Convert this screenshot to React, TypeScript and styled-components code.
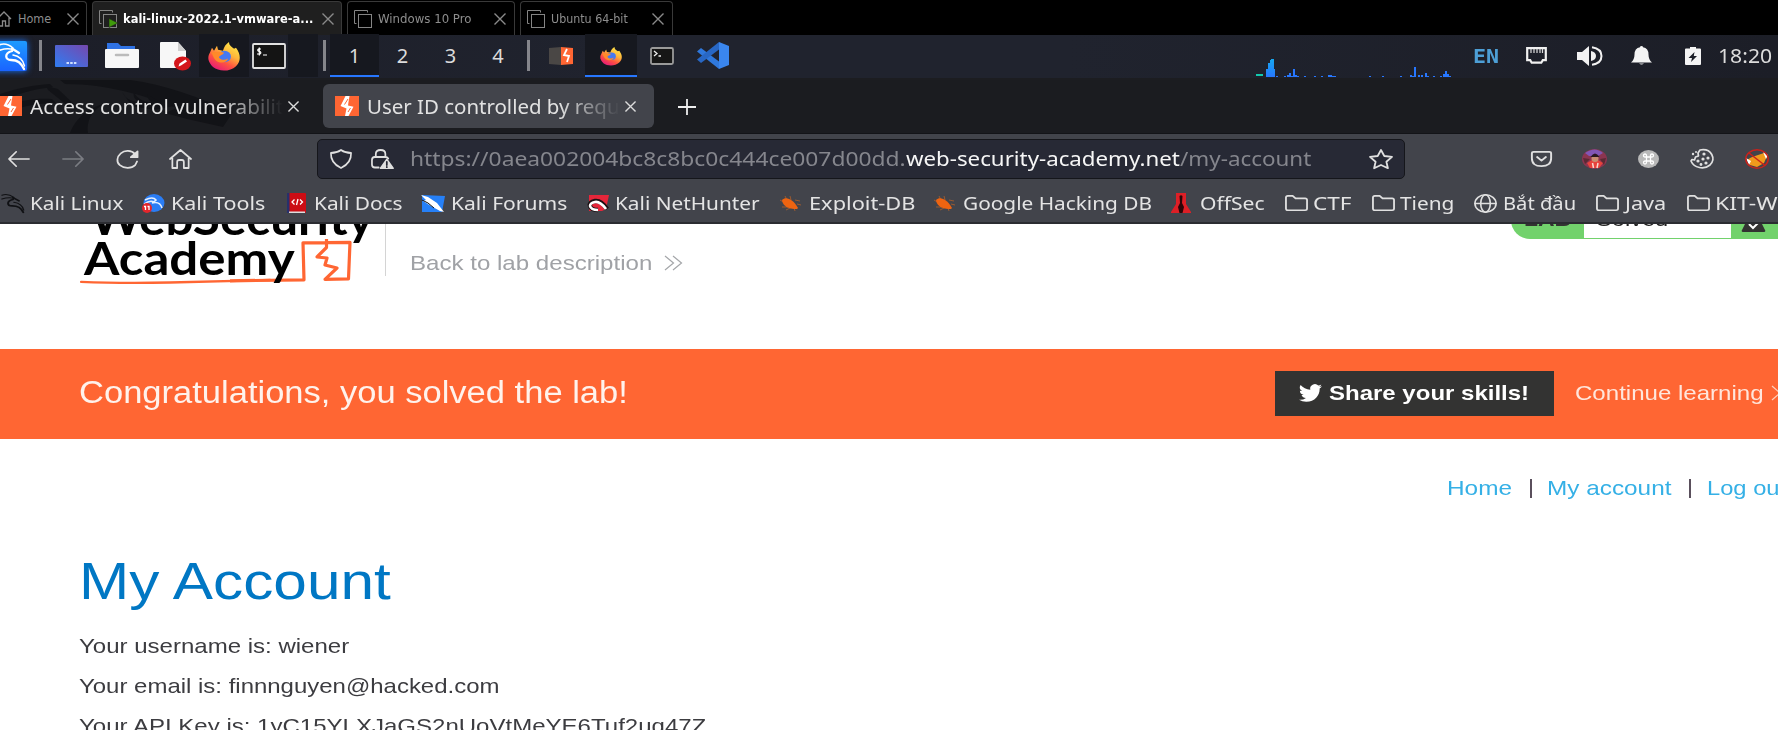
import React, { useLayoutEffect, useRef, useState } from "react";
import styled, { createGlobalStyle, css } from "styled-components";

const GlobalStyle = createGlobalStyle`
  *, *::before, *::after { box-sizing: border-box; }
  html, body { margin: 0; background: #fff; overflow: hidden; }
  svg { display: block; flex: none; overflow: visible; }
`;

const ui = `"Noto Sans", "Open Sans", sans-serif`;
const web = `"Liberation Sans", Arial, sans-serif`;
const host = `"DejaVu Sans Condensed", "DejaVu Sans", sans-serif`;

/* ---------- text whose width is stretched to a fixed measure ---------- */

const Measure = styled.span<{ $w: number; $gap?: number }>`
  display: block;
  flex: none;
  width: ${(p) => p.$w}px;
  margin-left: ${(p) => p.$gap ?? 0}px;
  text-align: left;
  white-space: nowrap;
`;
const Glyphs = styled.span`
  display: inline-block;
  transform-origin: 0 50%;
`;

function Fit({ w, gap, children }: { w: number; gap?: number; children: React.ReactNode }) {
  const ref = useRef<HTMLSpanElement>(null);
  const [scale, setScale] = useState(1);
  useLayoutEffect(() => {
    if (ref.current) setScale(w / ref.current.offsetWidth);
  }, [w]);
  return (
    <Measure $w={w} $gap={gap}>
      <Glyphs ref={ref} style={{ transform: `scaleX(${scale})` }}>
        {children}
      </Glyphs>
    </Measure>
  );
}

const Icon = styled.svg<{ $gap?: number; $drop?: number }>`
  margin-left: ${(p) => p.$gap ?? 0}px;
  margin-top: ${(p) => p.$drop ?? 0}px;
`;

const Screen = styled.div`
  width: 1778px;
  height: 730px;
  overflow: hidden;
  display: flex;
  flex-direction: column;
  background: #fff;
`;

/* ---------- host tabs ---------- */

const HostBar = styled.div`
  height: 35px;
  flex: none;
  background: #000;
  display: flex;
  padding-top: 1px;
`;
const HostTab = styled.div<{ $w: number; $gap: number; $active?: boolean }>`
  display: flex;
  align-items: center;
  width: ${(p) => p.$w}px;
  height: 34px;
  margin-left: ${(p) => p.$gap}px;
  border: 1px solid #393939;
  border-bottom: 0;
  border-radius: 4px 4px 0 0;
  font: 12.5px/16px ${host};
  color: #8d8d8d;
  ${(p) =>
    p.$active &&
    css`
      background: #1f1f1f;
      color: #fff;
      font-weight: 700;
    `}
`;

const Close = ({ gap, size = 12, color = "#8a8a8a", sw = 1.4 }: { gap: number; size?: number; color?: string; sw?: number }) => (
  <Icon $gap={gap} width={size} height={size} viewBox="0 0 12 12" stroke={color} strokeWidth={sw}>
    <path d="M.5.5l11 11M11.5.5l-11 11" />
  </Icon>
);

const VmIcon = ({ gap, running }: { gap: number; running?: boolean }) => (
  <Icon $gap={gap} width="18" height="18" viewBox="0 0 18 18" fill="none" stroke="#858585" strokeWidth="1">
    <path d="M2.500 13.500H.5V.5h13v2" />
    <rect x="4.500" y="4.500" width="13" height="13" />
    {running && <path d="M10 8.500v9l9-4.500z" fill="#3f9b0b" stroke="#1f1f1f" strokeWidth=".6" />}
  </Icon>
);

/* ---------- desktop panel ---------- */

const Panel = styled.div`
  height: 45px;
  flex: none;
  display: flex;
  align-items: center;
  padding-bottom: 2px;
  background: linear-gradient(90deg, #1c1e28 0%, #20232e 35%, #20232e 60%, #1c1e27 100%);
  border-bottom: 2px solid #1c1d21;
  font: 20px/28px ${ui};
  color: #dcdcdc;
`;
const Divider = styled.div<{ $gap: number }>`
  width: 3px;
  height: 31px;
  flex: none;
  margin-left: ${(p) => p.$gap}px;
  background: #85868c;
`;
const Slot = styled.div<{ $w: number; $gap?: number; $dark?: boolean; $active?: boolean }>`
  display: flex;
  flex: none;
  align-items: center;
  justify-content: center;
  width: ${(p) => p.$w}px;
  height: 43px;
  margin-left: ${(p) => p.$gap ?? 0}px;
  background: ${(p) => (p.$dark ? "#16181f" : "transparent")};
  box-shadow: ${(p) => (p.$active ? "inset 0 -2px #2777ff" : "none")};
`;
const Lang = styled.div`
  font: 700 20px/28px "DejaVu Sans Mono", monospace;
  color: #4d9fd6;
`;

const Dragon = ({ color = "#fff" }: { color?: string }) => (
  <g fill="none" stroke={color} strokeLinecap="round" strokeLinejoin="round">
    <path d="M0 4q7-3 14 3" strokeWidth="1.500" />
    <path d="M0 9.500q8-3 14-1" strokeWidth="1.500" />
    <path d="M13 7.500l7 4.500M13 10c-8 2-7 9-1 9 7 0 10 3 13 9" strokeWidth="2.300" />
    <path d="M14 14c6 1 10 4 11.500 11" strokeWidth="1.500" />
  </g>
);

const Firefox = ({ w, h, id }: { w: number; h: number; id: string }) => (
  <svg width={w} height={h} viewBox="0 0 32 29" preserveAspectRatio="none">
    <defs>
      <linearGradient id={id} x1="0.85" y1="0" x2="0.25" y2="1">
        <stop offset="0" stopColor="#fff04a" />
        <stop offset=".4" stopColor="#ffb43a" />
        <stop offset=".68" stopColor="#ff5340" />
        <stop offset="1" stopColor="#e5167c" />
      </linearGradient>
    </defs>
    <path d="M2 11l2-5 2 3 3-5 1 4 5 1c1-4 3-7 6-9 0 4 3 5 5 7l2-1c5 7 5 14 0 19-6 6-17 6-23 1C0 21-1 16 2 11z" fill={`url(#${id})`} />
    <ellipse cx="16.500" cy="15" rx="6.500" ry="6" fill="#4579f2" />
    <path d="M3 11l6-1q4 0 7 1c-1 3-5 3-5 5 2 3 6 3 9 1-1 5-9 6-13 1-2-2-2-5-4-7z" fill="#ff8a2a" />
  </svg>
);

const bars: [number, number][] = [
  [20, 1], [28, 1], [31, 2], [33, 4], [35, 1], [37, 8], [39, 2], [41, 1], [48, 1], [58, 1], [65, 1], [72, 2],
  [74, 2], [76, 1], [78, 1], [113, 1], [126, 1], [144, 1], [154, 2], [156, 1], [158, 10], [162, 2], [165, 2],
  [169, 4], [171, 1], [177, 1], [184, 1], [187, 3], [189, 6], [191, 3], [193, 1],
];

/* ---------- browser ---------- */

const TabStrip = styled.div`
  position: relative;
  height: 54px;
  flex: none;
  display: flex;
  align-items: center;
  padding-bottom: 1px;
  background: #1b1c20;
  border-bottom: 1px solid #131418;
  font: 19px/26px ${ui};
  color: #e2e2e2;
`;
const Backdrop = styled.svg`
  position: absolute;
  left: 0;
  top: 0;
`;
const BrowserTab = styled.div<{ $w: number; $gap?: number; $active?: boolean }>`
  position: relative;
  display: flex;
  align-items: center;
  width: ${(p) => p.$w}px;
  height: 44px;
  margin-left: ${(p) => p.$gap ?? 0}px;
  border-radius: 6px;
  background: ${(p) => (p.$active ? "#42444b" : "transparent")};
`;
const Title = styled.div<{ $w: number; $gap: number }>`
  flex: none;
  width: ${(p) => p.$w}px;
  margin-left: ${(p) => p.$gap}px;
  padding-top: 2px;
  overflow: hidden;
  mask-image: linear-gradient(90deg, #000 76%, transparent 100%);
`;

const PortSwigger = ({ gap }: { gap: number }) => (
  <Icon $gap={gap} width="24" height="20" viewBox="0 0 24 20" preserveAspectRatio="none">
    <rect width="24" height="20" fill="#ff6633" />
    <path d="M10.500 0h4l-1 6-.5 3.500 5.500 1.200-5 9.300h-3.500l1.500-7.500-6-2.500z" fill="#fff" />
    <path d="M13 3l-3.500 5.500M15.500 12L13 16" stroke="#ff6633" strokeWidth="1" />
  </Icon>
);

const Toolbar = styled.div`
  height: 50px;
  flex: none;
  display: flex;
  align-items: center;
  background: #42444b;
`;
const UrlBar = styled.div`
  display: flex;
  align-items: center;
  flex: none;
  width: 1088px;
  height: 40px;
  margin-left: 125px;
  border: 1px solid #15161b;
  border-radius: 5px;
  background: #272935;
  font: 20px/28px ${ui};
  color: #85868d;
`;
const Domain = styled.span`
  color: #f6f6f6;
`;
const Bookmarks = styled.div`
  height: 40px;
  flex: none;
  display: flex;
  align-items: center;
  background: #42444b;
  border-bottom: 2px solid #2b2c31;
  font: 18.5px/28px ${ui};
  color: #e4e4e4;
`;

const Line = ({ w, h, gap, children, color = "#e0e0e0", sw = 1.8 }: any) => (
  <Icon
    $gap={gap}
    width={w}
    height={h}
    viewBox="0 0 24 20"
    preserveAspectRatio="none"
    fill="none"
    stroke={color}
    strokeWidth={sw}
    strokeLinecap="round"
    strokeLinejoin="round"
  >
    {children}
  </Icon>
);

const Folder = ({ gap }: { gap: number }) => (
  <Line w={23} h={17} gap={gap} sw={1.9}>
    <path d="M1 16V3q0-2 2-2h5l3 3h10q2 0 2 2v10q0 2-2 2H3q-2 0-2-2z" />
  </Line>
);
const Bug = ({ gap }: { gap: number }) => (
  <Icon $gap={gap} width="22" height="17" viewBox="0 0 22 17">
    <path d="M1 5l5 3M6 1l2 4M11 1l1 4M16 5l5 1M18 9l4 1M3 12h6M7 15l6-3M16 16l-1-3" stroke="#9a5a30" strokeWidth="1" />
    <path d="M3 5c4-4 11-1 16 8l-1 1c-6 0-14-1-15-9z" fill="#ee6411" />
  </Icon>
);

/* ---------- page ---------- */

const Page = styled.main`
  flex: 1;
  min-height: 0;
  overflow: hidden;
  font: 21px/30px ${web};
  color: #3c3c40;
`;
const LabHeader = styled.header`
  display: flex;
  align-items: flex-start;
  height: 125px;
`;
const Logo = styled.div`
  position: relative;
  width: 305px;
  height: 62px;
  flex: none;
  margin-left: 80px;
  overflow: hidden;
  font: 700 46px/40px Lato, sans-serif;
  color: #000;
`;
const LogoMark = styled.svg`
  position: absolute;
  left: 0;
  top: 0;
`;
const LogoText = styled.div`
  position: relative;
  margin-top: -26px;
`;
const BackLink = styled.a`
  display: flex;
  align-items: center;
  height: 52px;
  padding: 26px 0 0 24px;
  border-left: 1px solid #d4d4d4;
  color: #a0a2a6;
  line-height: 26px;
`;
const Status = styled.div`
  display: flex;
  flex: none;
  align-items: flex-end;
  width: 290px;
  height: 38px;
  margin: -23px 0 0 829px;
  border-radius: 19px;
  background: #72d26c;
  font-weight: 700;
  color: #333332;
`;
const StatusLabel = styled.div`
  line-height: 36px;
  padding-bottom: 2px;
`;
const StatusValue = styled.div`
  width: 147px;
  height: 36px;
  margin: 0 0 1.5px 13px;
  padding-left: 12px;
  background: #fff;
  font-weight: 400;
  line-height: 34px;
  color: #222;
`;
const Flask = styled(Icon)`
  margin-bottom: 7px;
`;
const Banner = styled.section`
  display: flex;
  align-items: center;
  height: 90px;
  padding-left: 79px;
  background: #ff6633;
  color: #fff2ec;
`;
const BannerTitle = styled.div`
  font-size: 31px;
  line-height: 36px;
  padding-bottom: 3px;
`;
const Share = styled.button`
  display: flex;
  align-items: center;
  flex: none;
  width: 279px;
  height: 45px;
  margin: 0 0 1px 647px;
  padding: 0 0 2px 24px;
  border: 0;
  background: #333332;
  color: #fff;
  font: 700 21px/30px ${web};
`;
const Continue = styled.a`
  display: flex;
  align-items: center;
  margin-left: 21px;
  padding-bottom: 3px;
  color: #ffe6dc;
`;
const AccountNav = styled.nav`
  display: flex;
  padding: 34px 0 0 1447px;
  color: #35b0e6;
`;
const Bar = styled.span`
  flex: none;
  width: 2px;
  height: 19px;
  margin: 6px 0 0 18px;
  background: #5a4f5c;
`;
const Heading = styled.h1`
  margin: 48px 0 0 79px;
  font: 400 52px/60px ${web};
  color: #0077c4;
`;
const Details = styled.div`
  display: flex;
  flex-direction: column;
  gap: 10px;
  padding: 20px 0 0 79px;
`;

export default function App() {
  return (
    <Screen>
      <GlobalStyle />

      <HostBar>
        <HostTab $w={90} $gap={-3}>
          <Icon $gap={-2} width="16" height="16" viewBox="0 0 16 16" fill="none" stroke="#8a8a8a" strokeWidth="1.300">
            <path d="M1 8l7-7 7 7M3 6.500V15h3.500v-5h3v5H13V6.500" />
          </Icon>
          <Fit w={33} gap={6}>Home</Fit>
          <Close gap={16} />
        </HostTab>
        <HostTab $w={250} $gap={5} $active>
          <VmIcon gap={6} running />
          <Fit w={190} gap={6}>kali-linux-2022.1-vmware-a...</Fit>
          <Close gap={9} />
        </HostTab>
        <HostTab $w={168} $gap={5}>
          <VmIcon gap={6} />
          <Fit w={93} gap={6}>Windows 10 Pro</Fit>
          <Close gap={23} />
        </HostTab>
        <HostTab $w={153} $gap={5}>
          <VmIcon gap={6} />
          <Fit w={77} gap={6}>Ubuntu 64-bit</Fit>
          <Close gap={24} />
        </HostTab>
      </HostBar>

      <Panel>
        <Icon width="27" height="30" viewBox="0 0 27 30">
          <defs>
            <linearGradient id="kali" x1="0" y1="1" x2="0" y2="0">
              <stop offset="0" stopColor="#1a63ff" />
              <stop offset="1" stopColor="#1e9bff" />
            </linearGradient>
          </defs>
          <rect x="-8" width="35" height="30" rx="2" fill="url(#kali)" style={{ filter: "drop-shadow(0 0 3px #1775ff)" }} />
          <g transform="translate(-1 0)"><Dragon /></g>
        </Icon>
        <Divider $gap={12} />
        <Icon $gap={13} width="33" height="22" viewBox="0 0 33 22">
          <defs>
            <linearGradient id="desk" x1="0" y1="1" x2="1" y2="0">
              <stop offset="0" stopColor="#2f7df2" />
              <stop offset="1" stopColor="#7648ae" />
            </linearGradient>
          </defs>
          <rect width="33" height="22" rx="1" fill="url(#desk)" />
          <path d="M11.500 18h10" stroke="#cfe0ff" strokeWidth="2" strokeDasharray="2.500 1.200" />
        </Icon>
        <Icon $gap={17} width="34" height="25" viewBox="0 0 34 25">
          <path d="M2 0h11l3 3h14v8H2z" fill="#2f72e4" />
          <rect y="6" width="34" height="19" rx="1" fill="#f7f7f7" />
          <path d="M11 12h12" stroke="#bbb" strokeWidth="2.500" strokeLinecap="round" />
        </Icon>
        <Icon $gap={21} width="32" height="28" viewBox="0 0 32 28">
          <path d="M1 0h17l8 9v17H1q-1 0-1-1V1q0-1 1-1z" fill="#f7f7f7" />
          <path d="M18 0l8 9h-8z" fill="#cfcfcf" />
          <ellipse cx="22.500" cy="21.500" rx="8.500" ry="7" fill="#d4161b" />
          <path d="M18.500 24.500l1-3 6-4 1.500 2-6 4z" fill="#fff" />
        </Icon>
        <Slot $w={50} $gap={7} $dark><Firefox id="fxLarge" w={32} h={28} /></Slot>
        <Icon $gap={3} width="34" height="26" viewBox="0 0 34 26">
          <rect x="1" y="1" width="32" height="24" rx="1" fill="#141414" stroke="#e2e2e2" strokeWidth="1.800" />
          <path d="M9 6H6.500q-1.500 1.200 0 2.200l1.800.5q1.200 1.500-.3 2.300H5M7.300 4.500v8M11 12h4" fill="none" stroke="#fff" strokeWidth="1.200" />
        </Icon>
        <Slot $w={30} $gap={2} $dark />
        <Divider $gap={5} />
        <Slot $w={49} $gap={4} $dark $active>1</Slot>
        <Slot $w={47}>2</Slot>
        <Slot $w={49}>3</Slot>
        <Slot $w={46}>4</Slot>
        <Divider $gap={6} />
        <Icon $gap={19} width="24" height="18" viewBox="0 0 24 18">
          <path d="M0 1l12-1v18L0 17z" fill="#4a4745" />
          <path d="M12 0l12 1v16l-12 1z" fill="#ff6633" />
          <path d="M18 2l-3 6 5 1-2 6" fill="none" stroke="#fff" strokeWidth="1.800" />
        </Icon>
        <Slot $w={52} $gap={12} $dark $active><Firefox id="fxSmall" w={22} h={18} /></Slot>
        <Icon $gap={13} width="24" height="18" viewBox="0 0 24 18">
          <rect x="1" y="1" width="22" height="16" rx="1.500" fill="#161616" stroke="#9a9a9a" strokeWidth="1.800" />
          <path d="M4 4l3 2.500L4 9M8.500 9H11" fill="none" stroke="#eee" strokeWidth="1.300" />
        </Icon>
        <Icon $gap={23} width="32" height="27" viewBox="0 0 32 27">
          <path d="M22 27v-7.500L4 6 0 9.500z" fill="#2f78dc" />
          <path d="M22 0v7.500L4 21l-4-3.500z" fill="#2867c4" />
          <path d="M22 0l10 4v19l-10 4z" fill="#3a86ee" />
        </Icon>
        <Icon $gap={527} $drop={25} width="194" height="18" viewBox="0 0 194 18" shapeRendering="crispEdges">
          <defs>
            <linearGradient id="load" x1="0" y1="0" x2="0" y2="1">
              <stop offset="0" stopColor="#16a8f0" />
              <stop offset="1" stopColor="#2777ff" />
            </linearGradient>
          </defs>
          <rect y="15" width="7" height="2" fill="#12c9ae" />
          <path d="M10 18v-8h2V4h2V1l2-1h2v10h1v8z" fill="url(#load)" />
          {bars.map(([x, h]) => (
            <rect key={x} x={x} y={18 - h} width="2" height={h} fill="#2777ff" />
          ))}
        </Icon>
        <Lang><Fit w={26} gap={23}>EN</Fit></Lang>
        <Icon $gap={27} width="21" height="17" viewBox="0 0 21 17">
          <path d="M1.200 1.200h18.600v12h-3l-1.500 2.500H5.700L4.200 13.200h-3z" fill="none" stroke="#f0f0f0" strokeWidth="2.200" />
          <path d="M5 2v4M8 2v4M11 2v4M14 2v4M16.500 2v4" stroke="#ddd" strokeWidth="1.200" />
        </Icon>
        <Icon $gap={30} width="26" height="20" viewBox="0 0 26 20">
          <path d="M0 6h5l7-6v20l-7-6H0z" fill="#f2f2f2" />
          <path d="M14 5q5 1 5 5t-5 5z" fill="#f2f2f2" />
          <path d="M15 1.200q9.500 1.500 9.500 8.800T15 18.800" fill="none" stroke="#f2f2f2" strokeWidth="2" />
        </Icon>
        <Icon $gap={28} width="21" height="19" viewBox="0 0 21 19">
          <path d="M10.500 0q1.500 0 1.500 1.300 5.500 1 5.500 7.200 0 5 3.500 8H0q3.500-3 3.500-8Q3.500 2.300 9 1.300 9 0 10.500 0zM8 17.500h5q-2.500 2-5 0z" fill="#f4f4f4" />
        </Icon>
        <Icon $gap={33} width="16" height="18" viewBox="0 0 16 18">
          <path d="M5 0h6v1.500h4q1 0 1 1V17q0 1-1 1H1q-1 0-1-1V2.500q0-1 1-1h4z" fill="#f4f4f4" />
          <path d="M9.500 5L3.500 11H7l-1 4 6-6H8.800z" fill="#1c1e27" />
        </Icon>
        <Fit w={54} gap={17}>18:20</Fit>
      </Panel>

      <TabStrip>
        <Backdrop width="260" height="53" viewBox="0 0 260 53" fill="#121317">
          <path d="M0 14c18-6 34-9 50-10l3 3C34 9 16 14 0 22zM46 6l12 3 20 19-10-2-20-16z" />
          <path d="M0 28c20-8 36-10 52-9l4 4c-20 0-38 4-56 12z" />
          <path d="M60 0h70c34 4 70 18 103 32l-10 15-36-8-22-6 12-5c-26-10-66-24-112-24z" />
          <path d="M122 12c3 6 8 9 16 10-4-4-5-6-4-9 4 6 10 9 18 10-4-4-5-6-4-9 8 7 16 10 26 12l-20 4-22-4z" />
          <path d="M110 22c-22 5-34 16-40 31h18c-2-14 6-26 22-31z" />
        </Backdrop>
        <BrowserTab $w={310}>
          <PortSwigger gap={-2} />
          <Title $w={253} $gap={8}><Fit w={253}>Access control vulnerabilit</Fit></Title>
          <Close gap={5} size={11} color="#dcdcdc" sw={1.5} />
        </BrowserTab>
        <BrowserTab $w={331} $gap={13} $active>
          <PortSwigger gap={12} />
          <Title $w={253} $gap={8}><Fit w={253}>User ID controlled by requ</Fit></Title>
          <Close gap={5} size={11} color="#dcdcdc" sw={1.5} />
        </BrowserTab>
        <Icon $gap={24} $drop={2} width="18" height="16" viewBox="0 0 18 16" stroke="#eee" strokeWidth="1.800">
          <path d="M0 8h18M9 0v16" />
        </Icon>
      </TabStrip>

      <Toolbar>
        <Line w={22} h={16} gap={8}><path d="M1 10h22M9 1L1 10l8 9" /></Line>
        <Line w={22} h={16} gap={32} color="#7b7d83"><path d="M1 10h22M15 1l8 9-8 9" /></Line>
        <Line w={23} h={19} gap={32}>
          <path d="M20 4.500C16 0 9 0 5 3.500s-5 9-1 12.500 12 4 16 0l2-4" />
          <path d="M22.500 1.500v6h-7z" fill="#e0e0e0" />
        </Line>
        <Line w={23} h={20} gap={30}>
          <path d="M1 10L12 1l11 9M3.500 9v10h5v-6q0-2 2-2h3q2 0 2 2v6h5V9" />
        </Line>
        <UrlBar>
          <Line w={22} h={20} gap={12}>
            <path d="M12 1q4.500 3 11 3Q23.500 14 12 19 .5 14 1 4 7.500 4 12 1z" />
          </Line>
          <Line w={23} h={20} gap={19}>
            <path d="M5 8V5q0-4 5-4t5 4v3M8 18.500H4q-3 0-3-3V11q0-3 3-3h11q2 0 3 1.500" />
            <path d="M16.500 10.500L23 19.200H10z" fill="#e0e0e0" />
            <path d="M16.500 13v3M16.500 18v.2" stroke="#272935" />
          </Line>
          <Fit w={496} gap={16}>https://0aea002004bc8c8bc0c444ce007d00dd.</Fit>
          <Domain><Fit w={274}>web-security-academy.net</Fit></Domain>
          <Fit w={131}>/my-account</Fit>
          <Line w={24} h={20} gap={58}>
            <path d="M12 1l3.300 6 7.700.9-5.600 4.800 1.500 6.500L12 16l-6.900 3.200 1.500-6.500L1 7.900 8.700 7z" />
          </Line>
        </UrlBar>
        <Line w={21} h={16} gap={126} sw={2.2}>
          <path d="M3 1h18q2 0 2 2v6q0 10-11 10T1 9V3q0-2 2-2zM7 7.500l5 4.500 5-4.500" />
        </Line>
        <Icon $gap={30} width="25" height="20" viewBox="0 0 25 20">
          <ellipse cx="12.500" cy="10" rx="12.500" ry="10" fill="#8b3550" />
          <path d="M3 4q10-7 18 0l-5 3H7z" fill="#8256b5" />
          <path d="M1 9l7 1-5 5zM24 9l-6 1 4 6z" fill="#5b2a34" />
          <path d="M5 14l5-3h6l5 3-4 5H8z" fill="#e8423c" />
          <ellipse cx="13" cy="9.500" rx="3.500" ry="3.500" fill="#c98d72" />
          <path d="M8.500 8q4.500-7 9 0z" fill="#2a1820" />
          <path d="M10.500 14l1 5M16 14l-1 5" stroke="#f7d9d0" strokeWidth="1.500" />
        </Icon>
        <Icon $gap={31} width="21" height="18" viewBox="0 0 21 18">
          <ellipse cx="10.500" cy="9" rx="10.500" ry="9" fill="#b9b9b9" />
          <path d="M8.500 7V5.500q0-1.500-1.500-1.500t-1.500 1.500T7 7h7q1.500 0 1.500-1.500T14 4t-1.500 1.500v7q0 1.500 1.500 1.500t1.500-1.500T14 11H7q-1.500 0-1.500 1.500T7 14t1.500-1.500z" fill="none" stroke="#fff" strokeWidth="1.300" />
        </Icon>
        <Line w={24} h={20} gap={31} sw={1.7}>
          <path d="M10 1C22-1 26 10 20 16c-6 5-16 3-19-4l1-1.500 2.500.5 1-3 3-1-.5-3z" />
          <g fill="#e0e0e0" stroke="none">
            <circle cx="14" cy="5" r="1.600" /><circle cx="18" cy="9" r="1.600" /><circle cx="13" cy="10" r="1.600" />
            <circle cx="8" cy="12" r="1.600" /><circle cx="16" cy="14" r="1.600" /><circle cx="11" cy="15.500" r="1.400" />
            <circle cx="3" cy="5" r="1.200" /><circle cx="6" cy="3" r="1" />
          </g>
        </Line>
        <Icon $gap={31} width="24" height="20" viewBox="0 0 24 20">
          <path d="M2 11q4-3 8-4l9-3 3 3-3 7-7 4-7-2z" fill="#f09a1c" />
          <path d="M1 9l5 3-2 4zM18 3l5 3-2 4z" fill="#fff" />
          <ellipse cx="12" cy="10" rx="11.200" ry="9.200" fill="none" stroke="#c8221c" strokeWidth="1.500" />
          <path d="M4 4l16 12.500" stroke="#c8221c" strokeWidth="1.500" />
        </Icon>
      </Toolbar>

      <Bookmarks>
        <Icon $gap={1} width="24" height="20" viewBox="-1 1 28 28" preserveAspectRatio="none"><Dragon color="#101114" /></Icon>
        <Fit w={93} gap={5}>Kali Linux</Fit>
        <Icon $gap={19} width="23" height="19" viewBox="0 0 23 19">
          <ellipse cx="12" cy="9" rx="10.500" ry="9" fill="#2a7df5" />
          <path d="M3 6q8-4 11 0l-4 3q8-2 10 5M2 10q6-4 10-2" stroke="#e5f0ff" strokeWidth="1.500" fill="none" />
          <ellipse cx="5" cy="14" rx="5" ry="5" fill="#e2262c" />
          <path d="M2 12.500h1.500V16M5.500 12.500H7V16" stroke="#fff" strokeWidth="1.300" fill="none" />
        </Icon>
        <Fit w={94} gap={6}>Kali Tools</Fit>
        <Icon $gap={22} width="19" height="20" viewBox="0 0 19 20">
          <rect width="19" height="20" rx="1" fill="#cc0d14" />
          <path d="M0 0h2.500v20H0z" fill="#27306b" />
          <path d="M2 18.500h16V20H2z" fill="#ddd" />
          <path d="M7.500 6.500L5 9l2.500 2.500M13 6.500L15.500 9 13 11.500M11 6l-1.500 6" fill="none" stroke="#fff" strokeWidth="1.300" />
        </Icon>
        <Fit w={89} gap={8}>Kali Docs</Fit>
        <Icon $gap={18} width="25" height="19" viewBox="0 0 25 19">
          <path d="M1 1l23 1-3 16H1z" fill="#2680f7" />
          <path d="M0 1l7 2 9 6 7 9-4-1-9-5-8-5 3-1z" fill="#fff" />
          <path d="M1 6l6 3 6 5" stroke="#111" strokeWidth="1" fill="none" />
        </Icon>
        <Fit w={116} gap={5}>Kali Forums</Fit>
        <Icon $gap={18} width="25" height="18" viewBox="0 0 25 18">
          <path d="M4 1l20 0-3 14-4 2H4z" fill="#e5263a" />
          <path d="M22 15q-6-9-12-8t-5 5q1 4 8 4" fill="none" stroke="#1c1013" strokeWidth="4.500" />
          <path d="M21 15q-6-8-11-7t-5 4q1 4 8 4" fill="none" stroke="#fff" strokeWidth="2.600" />
        </Icon>
        <Fit w={145} gap={5}>Kali NetHunter</Fit>
        <Bug gap={19} />
        <Fit w={106} gap={8}>Exploit-DB</Fit>
        <Bug gap={18} />
        <Fit w={189} gap={8}>Google Hacking DB</Fit>
        <Icon $gap={19} width="20" height="20" viewBox="0 0 20 20">
          <path d="M5 0h10v11l5 8v1H0v-1l5-8z" fill="#dd1f26" />
          <path d="M8.500 3q1.500-1.500 3 0l-.5 7 2 4-1.500 6h-3L7 14l2-4z" fill="#2c0507" />
        </Icon>
        <Fit w={65} gap={9}>OffSec</Fit>
        <Folder gap={20} />
        <Fit w={39} gap={5}>CTF</Fit>
        <Folder gap={20} />
        <Fit w={54} gap={5}>Tieng</Fit>
        <Line w={23} h={19} gap={20} sw={1.7}>
          <ellipse cx="12" cy="10" rx="11" ry="9.200" />
          <ellipse cx="12" cy="10" rx="5" ry="9.200" />
          <path d="M1 10h22" />
        </Line>
        <Fit w={73} gap={6}>Bắt đầu</Fit>
        <Folder gap={20} />
        <Fit w={41} gap={6}>Java</Fit>
        <Folder gap={21} />
        <Fit w={62} gap={5}>KIT-W</Fit>
      </Bookmarks>

      <Page>
        <LabHeader>
          <Logo>
            <LogoMark width="305" height="62" viewBox="0 0 305 62" fill="none" stroke="#ff6633">
              <path d="M1 57.800Q40 59.500 90 58.500L190 56" strokeWidth="2.300" strokeLinecap="round" />
              <path d="M150 56.800l74-1-1-37 47-.5-1.500 36.500-23.500.500L257 44l-12-3 2-7-10-1 9.500-9.500V15" strokeWidth="3.200" strokeLinejoin="round" />
            </LogoMark>
            <LogoText>
              <Fit w={284} gap={10}>WebSecurity</Fit>
              <Fit w={211} gap={4}>Academy</Fit>
            </LogoText>
          </Logo>
          <BackLink>
            <Fit w={242}>Back to lab description</Fit>
            <Icon $gap={12} width="18" height="16" viewBox="0 0 18 16" fill="none" stroke="#a4a6a9" strokeWidth="1.200">
              <path d="M1 1l8.500 7L1 15M9 1l8.500 7L9 15" />
            </Icon>
          </BackLink>
          <Status>
            <StatusLabel><Fit w={47} gap={13}>LAB</Fit></StatusLabel>
            <StatusValue><Fit w={72}>Solved</Fit></StatusValue>
            <Flask $gap={10} width="25" height="28" viewBox="0 0 25 28">
              <path d="M8 0h9v12l7 14q1 2-1 2H2q-2 0-1-2L8 12z" fill="#333332" />
              <path d="M8 20l4 4 6-6" fill="none" stroke="#fff" strokeWidth="2" />
            </Flask>
          </Status>
        </LabHeader>

        <Banner>
          <BannerTitle><Fit w={549}>Congratulations, you solved the lab!</Fit></BannerTitle>
          <Share>
            <Icon width="23" height="18" viewBox="0 2 24 20" preserveAspectRatio="none">
              <path
                d="M23.950 4.570a10 10 0 0 1-2.820.77 4.960 4.960 0 0 0 2.160-2.720c-.95.55-2 .96-3.130 1.180a4.920 4.920 0 0 0-8.380 4.480C7.690 8.100 4.070 6.130 1.640 3.160a4.920 4.920 0 0 0 1.520 6.570 4.900 4.900 0 0 1-2.230-.61v.06a4.920 4.920 0 0 0 3.950 4.830 5 5 0 0 1-2.210.08 4.940 4.940 0 0 0 4.600 3.420A9.870 9.870 0 0 1 0 19.540a13.990 13.990 0 0 0 7.550 2.210c9.050 0 14-7.500 14-13.980l-.02-.64a10 10 0 0 0 2.460-2.550z"
                fill="#fff"
              />
            </Icon>
            <Fit w={200} gap={7}>Share your skills!</Fit>
          </Share>
          <Continue>
            <Fit w={189}>Continue learning</Fit>
            <Icon $gap={7} width="9" height="16" viewBox="0 0 9 16" fill="none" stroke="#ffd0bd" strokeWidth="1.200">
              <path d="M1 1l8 7-8 7" />
            </Icon>
          </Continue>
        </Banner>

        <AccountNav>
          <Fit w={65}>Home</Fit>
          <Bar />
          <Fit w={124} gap={15}>My account</Fit>
          <Bar />
          <Fit w={79} gap={16}>Log out</Fit>
        </AccountNav>

        <Heading><Fit w={312}>My Account</Fit></Heading>
        <Details>
          <Fit w={270}>Your username is: wiener</Fit>
          <Fit w={420}>Your email is: finnnguyen@hacked.com</Fit>
          <Fit w={627}>Your API Key is: 1yC15YLXJaGS2nUoVtMeYE6Tuf2uq47Z</Fit>
        </Details>
      </Page>
    </Screen>
  );
}
